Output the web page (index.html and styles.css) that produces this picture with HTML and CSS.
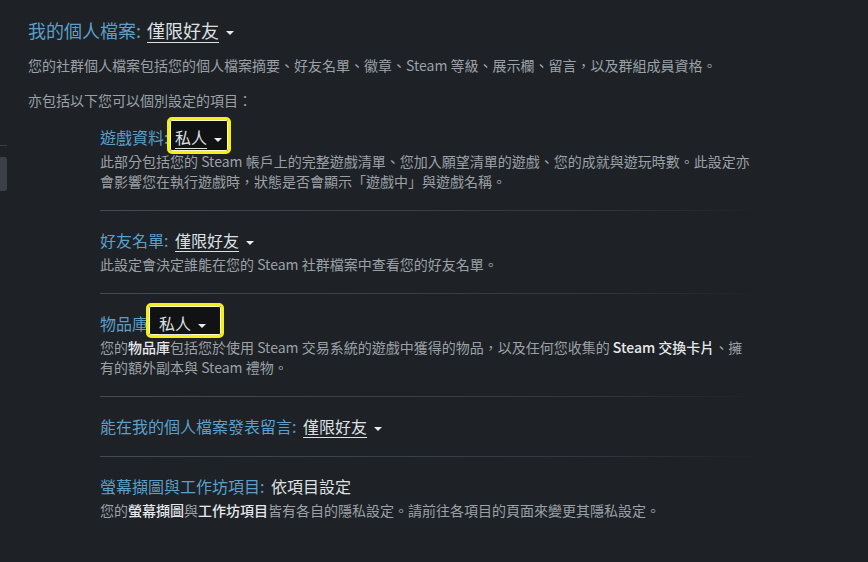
FILE: index.html
```html
<!DOCTYPE html>
<html lang="zh-Hant">
<head>
  <meta charset="UTF-8" />
  <meta name="viewport" content="width=device-width, initial-scale=1.0"/>
  <title>隱私設定</title>
  <link rel="stylesheet" href="styles.css">
</head>
<body>
  <aside class="side">
    <div class="side-line"></div>
    <div class="side-tab"></div>
  </aside>

  <main class="privacy">
    <h2 class="main-title">我的個人檔案: <span class="value">僅限好友</span><span class="caret"></span></h2>
    <p class="intro">您的社群個人檔案包括您的個人檔案摘要、好友名單、徽章、Steam 等級、展示欄、留言，以及群組成員資格。</p>
    <p class="intro intro-2">亦包括以下您可以個別設定的項目：</p>

    <div class="sections">
      <section class="item">
        <h3 class="item-title">遊戲資料: <span class="hl hl-a"><span class="value">私人</span><span class="caret"></span></span></h3>
        <p class="desc">此部分包括您的 Steam 帳戶上的完整遊戲清單、您加入願望清單的遊戲、您的成就與遊玩時數。此設定亦會影響您在執行遊戲時，狀態是否會顯示「遊戲中」與遊戲名稱。</p>
      </section>

      <section class="item">
        <h3 class="item-title">好友名單: <span class="value">僅限好友</span><span class="caret"></span></h3>
        <p class="desc">此設定會決定誰能在您的 Steam 社群檔案中查看您的好友名單。</p>
      </section>

      <section class="item">
        <h3 class="item-title">物品庫: <span class="hl hl-b"><span class="value">私人</span><span class="caret"></span></span></h3>
        <p class="desc">您的<b>物品庫</b>包括您於使用 Steam 交易系統的遊戲中獲得的物品，以及任何您收集的 <b>Steam 交換卡片</b>、擁有的額外副本與 Steam 禮物。</p>
      </section>

      <section class="item">
        <h3 class="item-title">能在我的個人檔案發表留言: <span class="value">僅限好友</span><span class="caret"></span></h3>
      </section>

      <section class="item">
        <h3 class="item-title">螢幕擷圖與工作坊項目: <span class="plain">依項目設定</span></h3>
        <p class="desc">您的<b>螢幕擷圖</b>與<b>工作坊項目</b>皆有各自的隱私設定。請前往各項目的頁面來變更其隱私設定。</p>
      </section>
    </div>
  </main>
</body>
</html>
```

FILE: styles.css
```css
body {
  margin: 0;
  background: #1e2126;
  font-family: "Noto Sans CJK TC", "Noto Sans", sans-serif;
  color: #9ba1a7;
  display: flex;
  height: 562px;
  overflow: hidden;
}

.side {
  width: 7px;
  flex-shrink: 0;
  padding-top: 145px;
}

.side-line {
  height: 1px;
  background: #3a3e45;
}

.side-tab {
  margin-top: 11px;
  height: 34px;
  background: #3b4049;
  border-radius: 0 3px 3px 0;
}

.privacy {
  padding: 18px 0 0 21px;
  width: 760px;
}

.main-title {
  margin: 0;
  font-size: 18px;
  font-weight: normal;
  line-height: 24px;
  color: #5c9fc8;
}

.main-title > .value {
  margin-left: 2px;
}

.value {
  color: #dde0e3;
  text-decoration: underline;
  text-underline-offset: 4px;
  text-decoration-thickness: 1px;
}

.plain {
  color: #dde0e3;
}

.caret {
  display: inline-block;
  margin-left: 7px;
  vertical-align: middle;
  border-left: 4px solid transparent;
  border-right: 4px solid transparent;
  border-top: 4px solid #e8eaec;
}

.intro {
  margin: 13px 0 0;
  font-size: 14px;
  line-height: 20px;
}

.intro-2 {
  margin-top: 15px;
}

.sections {
  margin-left: 72px;
  width: 654px;
}

.item {
  padding: 18px 0;
  position: relative;
}

.item:first-child {
  padding-top: 15px;
}

.item + .item::before {
  content: "";
  position: absolute;
  left: 0;
  top: 0;
  width: 660px;
  height: 1px;
  background: linear-gradient(to right, #464b53, #33373d 75%, rgba(48, 52, 58, 0));
}

.item-title {
  margin: 0;
  font-size: 16px;
  font-weight: normal;
  line-height: 24px;
  color: #5c9fc8;
}

.item-title > .value,
.item-title > .hl,
.item-title > .plain {
  margin-left: 3px;
}

.desc {
  margin: 2px 0 1px;
  font-size: 14px;
  line-height: 20px;
}

.desc b {
  color: #e6e9eb;
  font-weight: 500;
}

/* yellow highlight boxes */
.hl {
  display: inline-block;
  position: relative;
  z-index: 0;
}

.hl::before {
  content: "";
  position: absolute;
  z-index: -1;
  border: 3px solid #f3f018;
  border-radius: 5px;
  box-shadow: inset 0 0 0 1px #fcf9c8;
  background: #111214;
}

.hl-a::before {
  top: -8px;
  bottom: -5px;
  left: -8px;
  right: -9px;
}

.hl-b::before {
  top: -8px;
  bottom: -3px;
  left: -13px;
  right: -18px;
}
```
